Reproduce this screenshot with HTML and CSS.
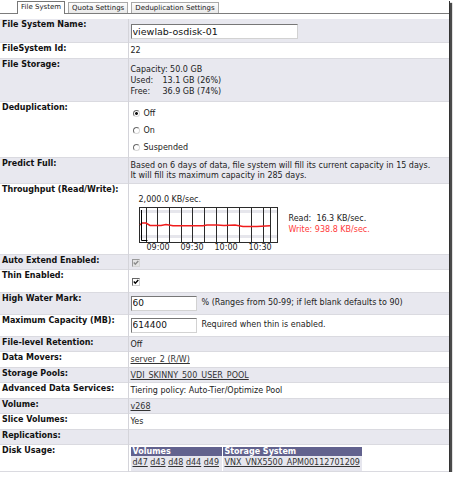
FILE: index.html
```html
<!DOCTYPE html>
<html>
  <head>
    <meta charset="UTF-8">
    <title>File System Properties</title>
    <link rel="stylesheet" href="styles.css">
  </head>
  <body>
    <div class="frame">
      <div class="tabs">
        <span class="tab active">File System</span>
        <span class="tab">Quota Settings</span>
        <span class="tab">Deduplication Settings</span>
      </div>
      <table class="props">
        <colgroup><col class="label-col"><col></colgroup>
        <tr>
          <th>File System Name:</th>
          <td class="input-cell"><input class="text-input name-input" type="text" value="viewlab-osdisk-01"></td>
        </tr>
        <tr>
          <th>FileSystem Id:</th>
          <td>22</td>
        </tr>
        <tr>
          <th>File Storage:</th>
          <td>
            <div class="storage">
              <div>Capacity: 50.0 GB</div>
              <div><span class="storage-key">Used:</span>13.1 GB (26%)</div>
              <div><span class="storage-key">Free:</span>36.9 GB (74%)</div>
            </div>
          </td>
        </tr>
        <tr>
          <th>Deduplication:</th>
          <td class="radio-cell">
            <div class="option"><span class="radio checked"></span>Off</div>
            <div class="option"><span class="radio"></span>On</div>
            <div class="option"><span class="radio"></span>Suspended</div>
          </td>
        </tr>
        <tr>
          <th>Predict Full:</th>
          <td>Based on 6 days of data, file system will fill its current capacity in 15 days.<br>It will fill its maximum capacity in 285 days.</td>
        </tr>
        <tr>
          <th>Throughput (Read/Write):</th>
          <td>
            <div class="chart">
              <div class="chart-main">
                <div class="chart-max">2,000.0 KB/sec.</div>
                <svg class="chart-plot" width="139" height="36" viewBox="0 0 139 36">
                  <rect x="0.5" y="0.5" width="138" height="35" fill="#fff"/>
                  <g fill="#e6e6ec">
                    <rect x="1" y="3" width="137" height="3"/>
                    <rect x="1" y="28" width="137" height="3"/>
                  </g>
                  <path stroke="#2b2b2b" fill="none" d="M7.5 1v34M18.5 1v34M30.5 1v34M42.5 1v34M53.5 1v34M65.5 1v34M77.5 1v34M88.5 1v34M100.5 1v34M112.5 1v34M124.5 1v34M131.5 1v34"/>
                  <rect x="0.5" y="0.5" width="138" height="35" fill="none" stroke="#2b2b2b"/>
                  <polyline fill="none" stroke="#f01c1c" stroke-width="1.6" points="1,18 3,16 7,16 11,18.5 22,18.5 27,17.5 34,18.7 64,18.7 68,18 78,18 85,18.5 96,18 104,19.5 118,19.5 131,18.7"/>
                  <path stroke="#000" fill="none" d="M2.5 3v30.5h6"/>
                </svg>
                <div class="chart-times"><span>09:00</span><span>09:30</span><span>10:00</span><span>10:30</span></div>
              </div>
              <div class="chart-legend">
                <div>Read:&nbsp; 16.3 KB/sec.</div>
                <div class="write">Write: 938.8 KB/sec.</div>
              </div>
            </div>
          </td>
        </tr>
        <tr>
          <th>Auto Extend Enabled:</th>
          <td>
            <span class="check disabled"><svg width="6" height="6" viewBox="0 0 6 6"><path d="M0.8 2.6l1.5 1.6 3-3.2"/></svg></span>
          </td>
        </tr>
        <tr>
          <th>Thin Enabled:</th>
          <td class="tall-check">
            <span class="check"><svg width="6" height="6" viewBox="0 0 6 6"><path d="M0.8 2.6l1.5 1.6 3-3.2"/></svg></span>
          </td>
        </tr>
        <tr>
          <th>High Water Mark:</th>
          <td class="input-cell">
            <div class="field"><input class="text-input num-input" type="text" value="60"><span>% (Ranges from 50-99; if left blank defaults to 90)</span></div>
          </td>
        </tr>
        <tr>
          <th>Maximum Capacity (MB):</th>
          <td class="input-cell">
            <div class="field"><input class="text-input num-input" type="text" value="614400"><span>Required when thin is enabled.</span></div>
          </td>
        </tr>
        <tr>
          <th>File-level Retention:</th>
          <td>Off</td>
        </tr>
        <tr>
          <th>Data Movers:</th>
          <td><a href="#">server_2 (R/W)</a></td>
        </tr>
        <tr>
          <th>Storage Pools:</th>
          <td><a href="#">VDI_SKINNY_500_USER_POOL</a></td>
        </tr>
        <tr>
          <th>Advanced Data Services:</th>
          <td>Tiering policy: Auto-Tier/Optimize Pool</td>
        </tr>
        <tr>
          <th>Volume:</th>
          <td><a href="#">v268</a></td>
        </tr>
        <tr>
          <th>Slice Volumes:</th>
          <td>Yes</td>
        </tr>
        <tr>
          <th>Replications:</th>
          <td></td>
        </tr>
        <tr>
          <th>Disk Usage:</th>
          <td class="disk-cell">
            <table class="disks">
              <tr><th>Volumes</th><th>Storage System</th></tr>
              <tr>
                <td><a href="#">d47</a> <a href="#">d43</a> <a href="#">d48</a> <a href="#">d44</a> <a href="#">d49</a></td>
                <td><a href="#">VNX_VNX5500_APM00112701209</a></td>
              </tr>
            </table>
          </td>
        </tr>
      </table>
    </div>
  </body>
</html>
```

FILE: styles.css
```css
body {
  margin: 0;
  background: #fff;
  font-family: "DejaVu Sans", Verdana, sans-serif;
  font-size: 8px;
  color: #222;
}
.frame {
  width: 449px;
  background: #fff;
  box-shadow: 1px 1px 0 #333, 3px 3px 1px #4a4a4a;
}

/* tab strip */
.tabs {
  display: flex;
  align-items: flex-end;
  height: 13px;
  padding-left: 17px;
  border-bottom: 1px solid #7c7c7c;
}
.tab {
  margin-right: 3px;
  padding: 0 3px;
  height: 10px;
  line-height: 10px;
  font-size: 7px;
  color: #222;
  border: 1px solid #a9a9a9;
  border-bottom: 0;
  background: linear-gradient(#fdfdfd, #e9e9e9);
}
.tab.active {
  height: 12px;
  line-height: 11px;
  margin-bottom: -1px;
  background: #fff;
  border-color: #777;
}

/* property table */
.props {
  width: 449px;
  margin-top: 5px;
  border-collapse: collapse;
  table-layout: fixed;
}
.label-col {
  width: 128px;
}
.props > tbody > tr {
  border-bottom: 1px solid #dadae0;
}
.props > tbody > tr:nth-child(odd) {
  background: #e8e8ef;
}
.props > tbody > tr > th {
  padding: 1px 2px 3px;
  line-height: 10.5px;
  text-align: left;
  vertical-align: top;
  color: #111;
  border-right: 1px solid #d4d4da;
}
.props > tbody > tr > td {
  padding: 3px 2px 1px;
  line-height: 10.5px;
  vertical-align: top;
}
.props a {
  color: #333;
  text-decoration: underline;
}

.input-cell {
  padding-bottom: 2px !important;
}
.text-input {
  display: block;
  box-sizing: border-box;
  height: 15px;
  margin: 0 0 1px;
  padding: 0 1px;
  border: 1px solid;
  border-color: #777 #d2d2d2 #d2d2d2 #777;
  background: #fff;
  color: #111;
  font: 9px "DejaVu Sans", Verdana, sans-serif;
}
.name-input {
  width: 167px;
  margin-top: 2px;
  font-size: 9.5px;
}
.num-input {
  width: 66px;
}
.field {
  display: flex;
  align-items: center;
  gap: 5px;
}

.storage {
  margin: 2px 0 3px;
  line-height: 11px;
}
.storage-key {
  display: inline-block;
  width: 32px;
}

.radio-cell {
  padding: 4px 2px 0 !important;
}
.option {
  display: flex;
  align-items: center;
  gap: 4px;
  height: 17px;
  padding-left: 2px;
}
.radio {
  box-sizing: border-box;
  width: 7px;
  height: 7px;
  margin-top: -2px;
  border: 1px solid;
  border-color: #6a6a6a #d8d8d8 #d8d8d8 #6a6a6a;
  border-radius: 50%;
  background: #fff;
}
.radio.checked {
  background: radial-gradient(circle, #111 1.2px, #fff 1.6px);
}

.check {
  display: inline-flex;
  align-items: center;
  justify-content: center;
  box-sizing: border-box;
  width: 8px;
  height: 8px;
  margin: 1px 0 0 1px;
  border: 1px solid;
  border-color: #666 #cfcfcf #cfcfcf #666;
  background: #fff;
  vertical-align: top;
}
.check path {
  fill: none;
  stroke: #000;
  stroke-width: 1.4;
}
.check.disabled {
  background: #e4e4e4;
  border-color: #9a9a9a #d6d6d6 #d6d6d6 #9a9a9a;
}
.check.disabled path {
  stroke: #8c8c8c;
}
.tall-check {
  padding: 7px 2px 4px !important;
}

/* throughput chart */
.chart {
  display: flex;
  align-items: flex-start;
  margin: 8px 0 0 8px;
}
.chart-max {
  line-height: 10px;
  margin-bottom: 2px;
}
.chart-plot {
  display: block;
}
.chart-times {
  display: flex;
  padding-left: 8px;
  line-height: 10px;
}
.chart-times span {
  width: 34px;
}
.chart-legend {
  margin: 18px 0 0 6px;
  line-height: 11px;
}
.chart-legend .write {
  color: #ff3a3a;
}

/* disk usage sub-table */
.disk-cell {
  padding: 2px 2px 0 !important;
}
.disks {
  border-collapse: separate;
  border-spacing: 1px 0;
  margin-left: -1px;
}
.disks th {
  padding: 0 2px;
  line-height: 9px;
  text-align: left;
  color: #fff;
  background: #62628e;
}
.disks th:first-child {
  width: 87px;
}
.disks th:last-child {
  width: 134px;
}
.disks td {
  padding: 2px 2px 3px;
  line-height: 10px;
  background: #e6e6ee;
}
```
